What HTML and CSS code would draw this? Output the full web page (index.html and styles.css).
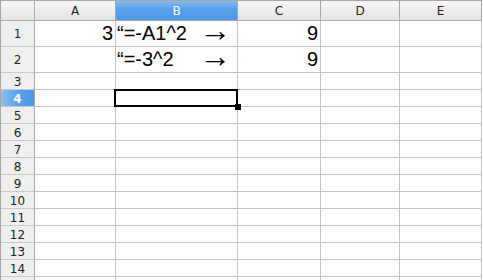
FILE: index.html
```html
<!DOCTYPE html>
<html>
<head>
<meta charset="utf-8">
<link rel="stylesheet" href="styles.css">
</head>
<body>
<div class="sheet">
  <div class="grid">
    <div class="corner"></div>
    <div class="colhead">A</div>
    <div class="colhead sel">B</div>
    <div class="colhead">C</div>
    <div class="colhead">D</div>
    <div class="colhead">E</div>

    <div class="rowhead">1</div>
    <div class="cell num">3</div>
    <div class="cell formula"><span>“=-A1^2</span><span class="arrow">→</span></div>
    <div class="cell num">9</div>
    <div class="cell"></div>
    <div class="cell"></div>

    <div class="rowhead">2</div>
    <div class="cell"></div>
    <div class="cell formula"><span>“=-3^2</span><span class="arrow">→</span></div>
    <div class="cell num">9</div>
    <div class="cell"></div>
    <div class="cell"></div>

    <div class="rowhead">3</div><div class="cell"></div><div class="cell"></div><div class="cell"></div><div class="cell"></div><div class="cell"></div>
    <div class="rowhead sel">4</div><div class="cell"></div><div class="cell"></div><div class="cell"></div><div class="cell"></div><div class="cell"></div>
    <div class="rowhead">5</div><div class="cell"></div><div class="cell"></div><div class="cell"></div><div class="cell"></div><div class="cell"></div>
    <div class="rowhead">6</div><div class="cell"></div><div class="cell"></div><div class="cell"></div><div class="cell"></div><div class="cell"></div>
    <div class="rowhead">7</div><div class="cell"></div><div class="cell"></div><div class="cell"></div><div class="cell"></div><div class="cell"></div>
    <div class="rowhead">8</div><div class="cell"></div><div class="cell"></div><div class="cell"></div><div class="cell"></div><div class="cell"></div>
    <div class="rowhead">9</div><div class="cell"></div><div class="cell"></div><div class="cell"></div><div class="cell"></div><div class="cell"></div>
    <div class="rowhead">10</div><div class="cell"></div><div class="cell"></div><div class="cell"></div><div class="cell"></div><div class="cell"></div>
    <div class="rowhead">11</div><div class="cell"></div><div class="cell"></div><div class="cell"></div><div class="cell"></div><div class="cell"></div>
    <div class="rowhead">12</div><div class="cell"></div><div class="cell"></div><div class="cell"></div><div class="cell"></div><div class="cell"></div>
    <div class="rowhead">13</div><div class="cell"></div><div class="cell"></div><div class="cell"></div><div class="cell"></div><div class="cell"></div>
    <div class="rowhead">14</div><div class="cell"></div><div class="cell"></div><div class="cell"></div><div class="cell"></div><div class="cell"></div>
    <div class="rowhead"></div><div class="cell"></div><div class="cell"></div><div class="cell"></div><div class="cell"></div><div class="cell"></div>
  </div>
  <div class="cursor"><div class="handle"></div></div>
</div>
</body>
</html>
```

FILE: styles.css
```css
* { box-sizing: border-box; }
html, body { margin: 0; padding: 0; background: #fff; overflow: hidden; }
body { width: 483px; height: 280px; }
.sheet {
  position: relative;
  width: 483px;
  height: 280px;
  background: #fff;
}
.grid {
  display: grid;
  grid-template-columns: 34px 81px 122px 83px 79px 82px;
  grid-template-rows: 20px 26px 26px;
  grid-auto-rows: 17px;
  border-top: 1px solid #a8a8a8;
  border-left: 1px solid #a8a8a8;
  width: 482px;
}
.grid > div {
  border-right: 1px solid #c4c4c4;
  border-bottom: 1px solid #c4c4c4;
}
.corner, .colhead {
  background: linear-gradient(#f7f7f7, #e4e4e4);
  border-right-color: #a8a8a8 !important;
  border-bottom-color: #a8a8a8 !important;
}
.colhead {
  font: 12px "DejaVu Sans", sans-serif;
  color: #222;
  display: flex;
  align-items: center;
  justify-content: center;
  padding-top: 1px;
}
.colhead.sel {
  background: linear-gradient(#86bbf1 0%, #5aa1ea 40%, #4d98e8 100%);
  color: #fff;
}
.rowhead {
  background: #efefef;
  border-right-color: #a8a8a8 !important;
  border-bottom-color: #c8c8c8 !important;
  font: 12px "DejaVu Sans", sans-serif;
  color: #222;
  display: flex;
  align-items: center;
  justify-content: center;
  padding-top: 1px;
}
.rowhead.sel {
  background: linear-gradient(90deg, #8cc0f2 0%, #5aa1ea 50%, #4d98e8 100%);
  color: #fff;
  font-weight: bold;
}
.cell {
  font: 20px "Liberation Sans", Arial, sans-serif;
  color: #000;
  display: flex;
  align-items: center;
}
.num { justify-content: flex-end; padding-right: 2px; }
.formula {
  justify-content: space-between;
  padding-left: 1px;
  padding-right: 6px;
  white-space: pre;
}
.arrow {
  font: 32px/20px "Liberation Serif", serif;
  position: relative;
  top: -4px;
}
.cursor {
  position: absolute;
  left: 114px;
  top: 89px;
  width: 124px;
  height: 18px;
  border: 2px solid #000;
}
.handle {
  position: absolute;
  right: -5px;
  bottom: -5px;
  width: 6px;
  height: 6px;
  background: #000;
}
```
